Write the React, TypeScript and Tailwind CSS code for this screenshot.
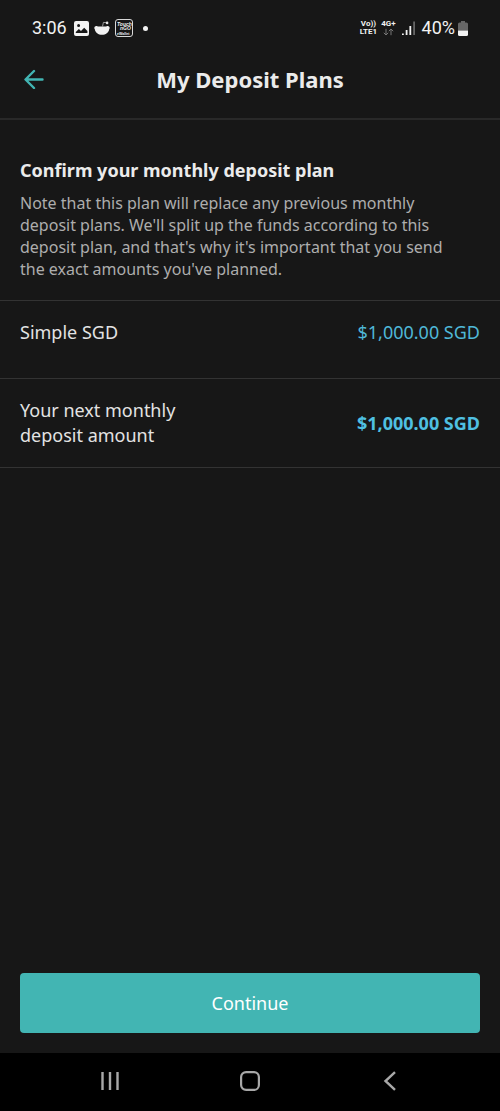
import React from 'react';

interface PlanRow {
  label: string;
  amount: string;
}

const plans: PlanRow[] = [{ label: 'Simple SGD', amount: '$1,000.00 SGD' }];

function ImageIcon() {
  return (
    <svg viewBox="0 0 15 15" className="size-[15px]" aria-hidden="true">
      <path fillRule="evenodd" fill="#f2f2f2" d="M2 0h11a2 2 0 0 1 2 2v11a2 2 0 0 1-2 2H2a2 2 0 0 1-2-2V2a2 2 0 0 1 2-2zM1.8 12h11.6V10L10.2 6.8 7 10 4.9 7.9 1.8 11zM4.6 3a1.5 1.5 0 1 0 0 3 1.5 1.5 0 0 0 0-3z" />
    </svg>
  );
}

function RedditIcon() {
  return (
    <svg viewBox="0 0 16 15" className="h-[15px] w-4" aria-hidden="true">
      <path d="M1.500 5.200c1-.5 2-.2 2.500.3h8c.5-.5 1.500-.8 2.500-.3 1.300.6 1.500 2 .7 3-.5 3.400-3.500 5.600-7.200 5.600S1.300 11.600.8 8.200c-.8-1-.6-2.400.7-3z" fill="#f2f2f2" />
      <path d="M8.500 5.500 9.400 1.400l3.200.3" fill="none" stroke="#bdbdbd" strokeWidth="0.8" />
      <circle cx="13.100" cy="1.900" r="1.300" fill="#e4e4e4" />
    </svg>
  );
}

function WalletIcon() {
  return (
    <svg viewBox="0 0 18 18" className="size-[18px]" fontFamily="Liberation Sans, sans-serif" fontWeight="bold" fill="#f2f2f2" aria-hidden="true">
      <rect x="0.5" y="0.5" width="17" height="17" rx="2.5" fill="none" stroke="#d8d8d8" />
      <text x="2" y="6.500" fontSize="5" fontStyle="italic">Touch</text>
      <text x="5" y="11" fontSize="5" fontStyle="italic">nGO</text>
      <text x="2" y="15.500" fontSize="3.600">eWallet</text>
    </svg>
  );
}

function StatusBar() {
  return (
    <div className="flex h-14 items-center justify-between px-8 font-[Roboto,sans-serif] text-[#f2f2f2]">
      <div className="flex items-center">
        <span className="text-[18px] leading-6">3:06</span>
        <div className="ml-[7px] flex items-center gap-[5px]">
          <ImageIcon />
          <RedditIcon />
          <WalletIcon />
        </div>
        <span className="ml-[10px] size-[5px] rounded-full bg-[#f2f2f2]" />
      </div>
      <div className="flex items-center">
        <div className="flex flex-col items-center text-[8px] leading-2 font-bold">
          <span>Vo))</span>
          <span>LTE1</span>
        </div>
        <div className="ml-1 flex flex-col items-center text-[8px] leading-2 font-bold">
          <span>4G+</span>
          <svg viewBox="0 0 11 8" className="h-2 w-[11px]" fill="none" stroke="#777" aria-hidden="true">
            <path d="M3 .8v6M.8 4.8 3 7l2.200-2.200M8 7.200v-6M5.800 3.200 8 1l2.200 2.200" />
          </svg>
        </div>
        <svg viewBox="0 0 14 15" className="ml-[6px] h-[15px] w-[14px]" aria-hidden="true">
          <path d="M0 12.500h1.800V14H0zM3.700 9h1.800v5H3.700zM7.400 5h1.800v9H7.400z" fill="#f2f2f2" />
          <path d="M11.200 .5H13V14h-1.800z" fill="#666" />
        </svg>
        <span className="ml-[6px] text-[18px] leading-6">40%</span>
        <svg viewBox="0 0 10 15" className="ml-[3px] h-[15px] w-[10px]" aria-hidden="true">
          <path d="M3 0h4v1.500h1.500A1.500 1.500 0 0 1 10 3v6.500H0V3a1.500 1.500 0 0 1 1.500-1.500H3z" fill="#666" />
          <path d="M0 9.500h10v4A1.500 1.500 0 0 1 8.500 15h-7A1.500 1.500 0 0 1 0 13.500z" fill="#f2f2f2" />
        </svg>
      </div>
    </div>
  );
}

function Header() {
  return (
    <header className="grid h-16 grid-cols-[48px_1fr_48px] items-center border-b-2 border-[#292929] pb-4">
      <button type="button" aria-label="Back" className="flex justify-end pr-1">
        <svg viewBox="0 0 20 20" className="size-5" fill="none" stroke="#42b5b3" strokeWidth="2.400" strokeLinecap="round" strokeLinejoin="round">
          <path d="M18.500 10.500H2M10 2 1.500 10.500 10 19" />
        </svg>
      </button>
      <h1 className="text-center text-[22px] leading-8 font-bold text-[#ebebeb]">My Deposit Plans</h1>
    </header>
  );
}

function NavBar() {
  return (
    <nav className="grid h-[58px] grid-cols-[80px_1fr_1fr_1fr_80px] items-center bg-black pb-0.5 text-[#a8a8a8]">
      <span />
      <button type="button" aria-label="Recent apps" className="flex justify-start pl-5">
        <svg viewBox="0 0 20 20" className="size-5" fill="none" stroke="currentColor" strokeWidth="2.400">
          <path d="M2.500 1v18M10 1v18M17.500 1v18" />
        </svg>
      </button>
      <button type="button" aria-label="Home" className="flex justify-center">
        <svg viewBox="0 0 20 20" className="size-5" fill="none" stroke="currentColor" strokeWidth="2.200">
          <rect x="1.100" y="1.100" width="17.800" height="17.800" rx="5" />
        </svg>
      </button>
      <button type="button" aria-label="Back" className="flex justify-end pr-5">
        <svg viewBox="0 0 20 20" className="size-5" fill="none" stroke="currentColor" strokeWidth="2.400">
          <path d="M15 1.200 5.500 10l9.500 8.800" />
        </svg>
      </button>
    </nav>
  );
}

export default function App() {
  return (
    <div className="flex min-h-screen flex-col bg-[#171717] font-['Noto_Sans',sans-serif] text-[#e3e3e3]">
      <StatusBar />
      <Header />
      <main className="flex flex-1 flex-col">
        <section className="border-b border-[#333] px-5 pt-9 pb-5">
          <h2 className="text-[18px] leading-7 font-bold text-[#ebebeb]">Confirm your monthly deposit plan</h2>
          <p className="mt-2 pr-5 text-[16px] leading-[22px] text-[#adadad]">
            Note that this plan will replace any previous monthly deposit plans. We'll split up the funds according to this deposit plan, and that's why it's important that you send the exact amounts you've planned.
          </p>
        </section>
        {plans.map((plan) => (
          <div key={plan.label} className="flex h-[78px] justify-between border-b border-[#333] px-5 pt-[19px] text-[18px] leading-[25px]">
            <span>{plan.label}</span>
            <span className="text-[#4fb8d8]">{plan.amount}</span>
          </div>
        ))}
        <div className="flex items-center justify-between border-b border-[#333] px-5 py-[19px] text-[18px] leading-[25px]">
          <span className="w-[180px]">Your next monthly deposit amount</span>
          <span className="font-bold text-[#4fc0e2]">$1,000.00 SGD</span>
        </div>
        <div className="mt-auto px-5 pb-5">
          <button type="button" className="h-[60px] w-full rounded bg-[#42b5b3] text-[18px] text-white">Continue</button>
        </div>
      </main>
      <NavBar />
    </div>
  );
}
